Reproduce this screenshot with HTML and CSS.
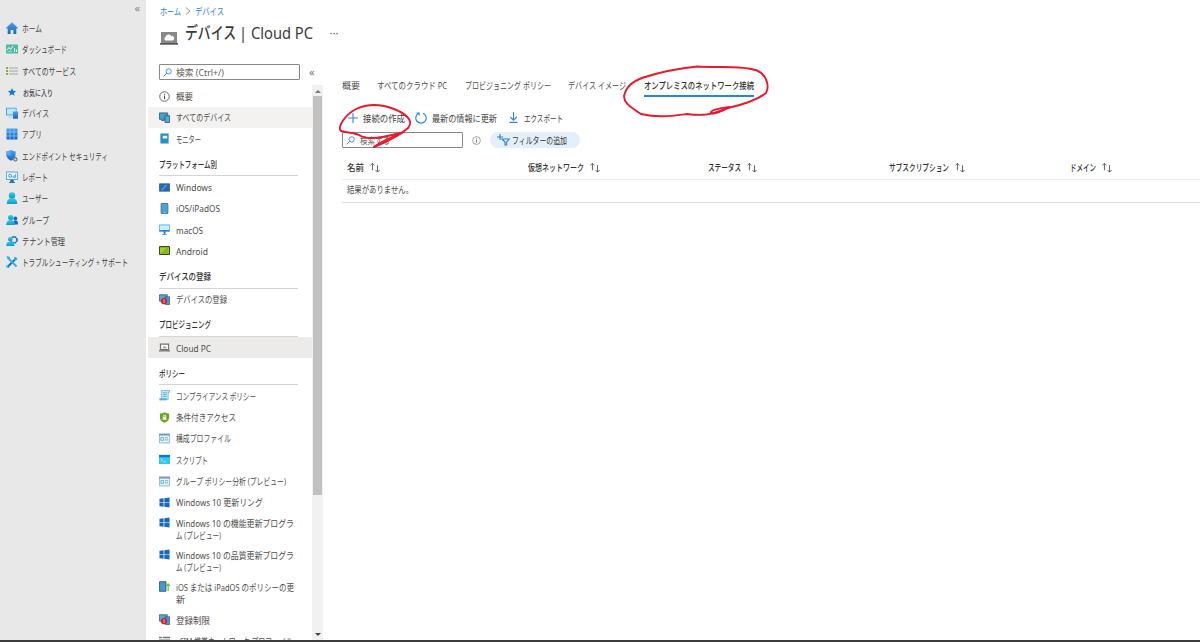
FILE: index.html
```html
<!DOCTYPE html>
<html lang="ja">
<head>
<meta charset="utf-8">
<title>デバイス | Cloud PC</title>
<link rel="stylesheet" href="styles.css">
</head>
<body>
<svg class="defs" width="0" height="0">
<defs>
<linearGradient id="cy" x1="0" y1="0" x2="0" y2="1"><stop offset="0" stop-color="#35cdea"/><stop offset="1" stop-color="#0b9bd0"/></linearGradient>
<linearGradient id="bl" x1="0" y1="0" x2="0" y2="1"><stop offset="0" stop-color="#4ba0ef"/><stop offset="1" stop-color="#1267ca"/></linearGradient>
<symbol id="i-home" viewBox="0 0 12 12"><path d="M6 .2 12 6l-.7.8-1-.5V12H7.400V8H4.600v4H1.700V6.300l-1 .5L0 6z" fill="url(#bl)"/></symbol>
<symbol id="i-dash" viewBox="0 0 12 12"><path d="M0 1.500h12v9H0z" fill="#4dbda3"/><path d="M1 7 3 4.500l1.500 2L7 3" fill="none" stroke="#fff" stroke-width=".9"/><path d="M8 5h1v4H8zM10 6.500h1V9h-1zM1.500 8.500H6v.6H1.500z" fill="#e6fff8"/></symbol>
<symbol id="i-list" viewBox="0 0 12 12"><path d="M0 2h2v2H0zM0 5h2v2H0zM0 8h2v2H0z" fill="#7db442"/><path d="M3 2.500h9v1H3zM3 5.500h9v1H3zM3 8.500h9v1H3z" fill="#a3a3a3"/></symbol>
<symbol id="i-star" viewBox="0 0 12 12"><path d="m6 2 1.200 2.800 2.900.2-2.200 1.900.7 2.900L6 8.300 3.400 9.800l.7-2.900L1.900 5l2.900-.2z" fill="#0f78d4"/></symbol>
<symbol id="i-dev" viewBox="0 0 12 12"><path d="M0 .8h10.500v7.500H0z" fill="#3d92df"/><path d="M.8 1.500h9v6h-9z" fill="#b3ecff"/><path d="M2.500 9.500h4v1h-4z" fill="#b8c5ce"/><path d="M7 4.500h5v7.200H7z" fill="url(#bl)"/></symbol>
<symbol id="i-apps" viewBox="0 0 12 12"><path d="M.5.5h11v11H.5z" fill="url(#bl)"/><path d="M4 .5v11M8 .5v11M.5 4h11M.5 8h11" stroke="#a6d4fb" stroke-width=".6"/></symbol>
<symbol id="i-shield" viewBox="0 0 12 12"><path d="M5 0c1.500 1 3 1.300 4.600 1.300V5c0 2.500-2 4.500-4.600 5.800C2.400 9.500.4 7.500.4 5V1.300C2 1.300 3.500 1 5 0z" fill="url(#bl)"/><path d="M5 0v5.300H.4V1.300C2 1.300 3.500 1 5 0z" fill="#55aaf4"/><circle cx="9.300" cy="9.300" r="1.700" fill="#d5d5d5" stroke="#777" stroke-width="1.200"/></symbol>
<symbol id="i-report" viewBox="0 0 12 12"><path d="M.4 1h11.200v7.500H.4z" fill="#eef9ff" stroke="#3290df" stroke-width=".8"/><path d="M4.500 8.800h3l.5 2.700H4z" fill="#1d6fb8"/><path d="M3 11h6v.8H3z" fill="#1d6fb8"/><circle cx="4.200" cy="4.800" r="1.500" fill="none" stroke="#2389d8" stroke-width=".9"/><path d="M7 5v2M8.300 4v3M9.600 2.800V7" stroke="#2389d8" stroke-width=".7"/></symbol>
<symbol id="i-user" viewBox="0 0 12 12"><path d="M.8 12C.8 8.300 2.500 6.300 6 6.300s5.200 2 5.200 5.700z" fill="url(#cy)"/><circle cx="6" cy="3.400" r="3.200" fill="url(#cy)"/></symbol>
<symbol id="i-group" viewBox="0 0 12 12"><circle cx="9.400" cy="4.500" r="1.900" fill="#1267c8"/><path d="M6.500 10.500c0-3 1-4 3-4s2.500 1 2.500 4z" fill="#1267c8"/><circle cx="4.700" cy="3.600" r="2.700" fill="url(#cy)"/><path d="M.2 11c0-3.500 1.800-5 4.500-5S9 7.500 9 11z" fill="url(#cy)"/></symbol>
<symbol id="i-tenant" viewBox="0 0 12 12"><circle cx="8" cy="4.900" r="3" fill="none" stroke="#176fd0" stroke-width="1.700" stroke-dasharray="1.900 .45"/><circle cx="4.300" cy="4.200" r="2.300" fill="url(#cy)"/><path d="M.2 11c0-3.300 1.500-4.600 4.100-4.600S8.500 7.700 8.500 11z" fill="url(#cy)"/></symbol>
<symbol id="i-tools" viewBox="0 0 12 12"><path d="m2 10.500 8.500-8.500" stroke="#1b6ac0" stroke-width="1.900"/><path d="m1.500 1.500 9 9" stroke="#27b4e3" stroke-width="2"/><path d="M.7.7 3 1.200l.8 1.600M9 .8 8.500 3.500l2.700-.4M.8 9l.3 2.200 2.200.3" fill="none" stroke="#27b4e3" stroke-width="1.200"/></symbol>
<symbol id="i-info" viewBox="0 0 12 12"><circle cx="6" cy="6" r="5.200" fill="none" stroke="currentColor" stroke-width=".9"/><path d="M5.400 5h1.200v4H5.400zM5.400 3h1.200v1.200H5.400z" fill="currentColor"/></symbol>
<symbol id="i-alldev" viewBox="0 0 12 12"><path d="M.5 1h9v7h-9z" fill="#37a5d6" stroke="#38576b" stroke-width=".9"/><path d="M2.500 8.800H6v1H2.500z" fill="#555"/><path d="M6.500 4h5v7.500h-5z" fill="#45afe0" stroke="#38576b" stroke-width=".9"/></symbol>
<symbol id="i-mon" viewBox="0 0 12 12"><path d="M1.500.5h9v11h-9z" fill="#2790c4"/><path d="M4 3h5v3H4z" fill="#e9f7ff"/></symbol>
<symbol id="i-win" viewBox="0 0 12 12"><path d="M.4 2h11.200v8H.4z" fill="#1e70bd" stroke="#47525c" stroke-width=".9"/><path d="m2 9 5-6h2L4 9z" fill="#4b9ee0"/></symbol>
<symbol id="i-ipad" viewBox="0 0 12 12"><rect x="2.300" y=".4" width="7.400" height="11.200" rx=".8" fill="#40a9d8" stroke="#4d626e" stroke-width=".9"/><path d="M5 10.700h2" stroke="#fff" stroke-width=".6"/></symbol>
<symbol id="i-mac" viewBox="0 0 12 12"><path d="M.4 1h11.200v7H.4z" fill="#c7efff" stroke="#3c9be8" stroke-width=".8"/><path d="M.4 6.500h11.200V8H.4zM5 8h2v3h1.500v.7h-5V11H5z" fill="#1f81dc"/></symbol>
<symbol id="i-and" viewBox="0 0 12 12"><rect x=".5" y="1.800" width="11" height="8.400" rx=".6" fill="#a2d525" stroke="#3c4434" stroke-width="1.200"/><path d="m2 9 6-6h2v6z" fill="#82b91a"/></symbol>
<symbol id="i-enr" viewBox="0 0 12 12"><path d="M.5.8h8.500v7H.5z" fill="#47aad8" stroke="#3a5568" stroke-width=".8"/><path d="M7 3h4.500v8.500H7z" fill="#38a0d4" stroke="#3a5568" stroke-width=".8"/><circle cx="5.500" cy="7.800" r="3.400" fill="#d5202d"/><path d="M5.500 6v2.200M5.500 8.800v1" stroke="#fff" stroke-width=".9"/></symbol>
<symbol id="i-cpc" viewBox="0 0 12 12"><path d="M1.600 2.400h8.800v6H1.600z" fill="#fff" stroke="#737373" stroke-width="1.300"/><path d="M0 9h12v1.300H0z" fill="#666"/><path d="M3.800 7h4.500V5.800L6.500 4.500 4.500 5z" fill="#aaa"/></symbol>
<symbol id="i-scroll" viewBox="0 0 12 12"><path d="M2.500.6h9v2H10v7.600H2.500z" fill="#c8ebfa" stroke="#5aaedb" stroke-width=".8"/><path d="M.4 9h8v2.300h-8z" fill="#4db1e2"/><path d="M4 3h4.500M4 5h4.500M4 7h4.500" stroke="#3289c5" stroke-width=".7"/></symbol>
<symbol id="i-cond" viewBox="0 0 12 12"><path d="M6 .3C7.500 1.300 9 1.700 11 1.700V6c0 3-2.200 4.600-5 5.800C3.200 10.600 1 9 1 6V1.700C3 1.700 4.500 1.300 6 .3z" fill="#65aa12"/><path d="M4 5h4v3.500H4z" fill="#fff"/><path d="M4.800 5V3.500h2.400V5" fill="none" stroke="#fff" stroke-width=".8"/></symbol>
<symbol id="i-conf" viewBox="0 0 12 12"><path d="M.4 1.200h11.200v9.600H.4z" fill="#e6f4fb" stroke="#6d9fbe" stroke-width=".8"/><path d="M0 .8h12v2H0z" fill="#779bb0"/><path d="M2 5h3v3H2zM6.500 5.200H10M6.500 7.500H10" fill="none" stroke="#4ba6d6" stroke-width=".9"/></symbol>
<symbol id="i-script" viewBox="0 0 12 12"><path d="M0 1h12v10H0z" fill="#31c7f2"/><path d="M0 1h12v2.500H0z" fill="#1673cb"/><path d="m2 5 2 1.500L2 8M5 8.500h2.500" fill="none" stroke="#fff" stroke-width=".7"/></symbol>
<symbol id="i-w10" viewBox="0 0 12 12"><path d="M.5 2 5 1.400v4.200H.5zM5.800 1.300l5.700-.8v5.100H5.800zM.5 6.400H5v4.200L.5 10zM5.800 6.400h5.700v5.100l-5.700-.8z" fill="#1769bc"/></symbol>
<symbol id="i-iosup" viewBox="0 0 12 12"><path d="M.6.8h7v10.400h-7z" fill="#3b9fd2" stroke="#39566a" stroke-width="1"/><path d="M10 11V3.500M8 5.500l2-2.300 2 2.300" fill="none" stroke="#78b833" stroke-width="1.300"/></symbol>
<symbol id="i-esim" viewBox="0 0 12 12"><path d="M0 2h3v1.500H0zM4 2h8v1.500H4zM0 5h12v6H0z" fill="#777"/></symbol>
<symbol id="i-search" viewBox="0 0 12 12"><circle cx="7.500" cy="4.500" r="3.500" fill="none" stroke="#3289d6" stroke-width="1.200"/><path d="M5 7 .8 11.200" stroke="#3289d6" stroke-width="1.300"/></symbol>
<symbol id="i-sort" viewBox="0 0 12 12"><path d="M3.200 9v-7.500M1 3.700l2.200-2.200 2.200 2.200M8.800 3.500v7.500M6.600 8.800l2.200 2.200 2.200-2.200" fill="none" stroke="#555" stroke-width="1"/></symbol>
</defs>
</svg>

<div class="app">
  <nav class="side">
    <div class="collapse">«</div>
    <div class="nav"><svg><use href="#i-home"/></svg><span data-w="20">ホーム</span></div>
    <div class="nav"><svg><use href="#i-dash"/></svg><span data-w="45">ダッシュボード</span></div>
    <div class="nav"><svg><use href="#i-list"/></svg><span data-w="54">すべてのサービス</span></div>
    <div class="nav fav"><svg><use href="#i-star"/></svg><span data-w="30">お気に入り</span></div>
    <div class="nav"><svg><use href="#i-dev"/></svg><span data-w="27">デバイス</span></div>
    <div class="nav"><svg><use href="#i-apps"/></svg><span data-w="20">アプリ</span></div>
    <div class="nav"><svg><use href="#i-shield"/></svg><span data-w="86">エンドポイント セキュリティ</span></div>
    <div class="nav"><svg><use href="#i-report"/></svg><span data-w="26">レポート</span></div>
    <div class="nav"><svg><use href="#i-user"/></svg><span data-w="26">ユーザー</span></div>
    <div class="nav"><svg><use href="#i-group"/></svg><span data-w="27">グループ</span></div>
    <div class="nav"><svg><use href="#i-tenant"/></svg><span data-w="43">テナント管理</span></div>
    <div class="nav"><svg><use href="#i-tools"/></svg><span data-w="106">トラブルシューティング + サポート</span></div>
  </nav>

  <div class="page">
    <header>
      <div class="crumbs"><span data-w="21">ホーム</span><svg viewBox="0 0 14 10"><path d="m5 1.500 4 3.500-4 3.500" fill="none" stroke="#999"/></svg><span data-w="29">デバイス</span></div>
      <div class="title">
        <svg class="pc" viewBox="0 0 18 13"><path d="M1 0h16v11H1z" fill="#898989"/><path d="M0 11h18v1.700H0z" fill="#555"/><path d="M5.500 8.500a2 2 0 0 1 0-3.600 3.200 3.200 0 0 1 6-.7 2.200 2.200 0 0 1 1 4.300z" fill="#fff"/></svg>
        <h1><b data-w="51">デバイス</b><span class="sub" data-w="74">| Cloud PC</span></h1>
        <span class="dots">···</span>
      </div>
    </header>
    <div class="body">
      <aside class="menu">
        <div class="searchrow"><div class="box"><svg><use href="#i-search"/></svg><span data-w="48">検索 (Ctrl+/)</span></div><span class="chev">«</span></div>
        <div class="scroll">
          <div class="list">
            <div class="row"><svg><use href="#i-info"/></svg><span data-w="17">概要</span></div>
            <div class="row hov"><svg><use href="#i-alldev"/></svg><span data-w="55">すべてのデバイス</span></div>
            <div class="row"><svg><use href="#i-mon"/></svg><span data-w="25">モニター</span></div>
            <h2><span data-w="58">プラットフォーム別</span></h2>
            <div class="row"><svg><use href="#i-win"/></svg><span data-w="36">Windows</span></div>
            <div class="row"><svg><use href="#i-ipad"/></svg><span data-w="44">iOS/iPadOS</span></div>
            <div class="row"><svg><use href="#i-mac"/></svg><span data-w="27">macOS</span></div>
            <div class="row"><svg><use href="#i-and"/></svg><span data-w="32">Android</span></div>
            <h2><span data-w="52">デバイスの登録</span></h2>
            <div class="row"><svg><use href="#i-enr"/></svg><span data-w="51">デバイスの登録</span></div>
            <h2><span data-w="52">プロビジョニング</span></h2>
            <div class="row sel"><svg><use href="#i-cpc"/></svg><span data-w="35">Cloud PC</span></div>
            <h2><span data-w="26">ポリシー</span></h2>
            <div class="row"><svg><use href="#i-scroll"/></svg><span data-w="80">コンプライアンス ポリシー</span></div>
            <div class="row"><svg><use href="#i-cond"/></svg><span data-w="60">条件付きアクセス</span></div>
            <div class="row"><svg><use href="#i-conf"/></svg><span data-w="55">構成プロファイル</span></div>
            <div class="row"><svg><use href="#i-script"/></svg><span data-w="32">スクリプト</span></div>
            <div class="row"><svg><use href="#i-conf"/></svg><span data-w="110">グループ ポリシー分析 (プレビュー)</span></div>
            <div class="row"><svg><use href="#i-w10"/></svg><span data-w="87">Windows 10 更新リング</span></div>
            <div class="row two"><svg><use href="#i-w10"/></svg><div><span data-w="118">Windows 10 の機能更新プログラ</span><span data-w="45">ム (プレビュー)</span></div></div>
            <div class="row two"><svg><use href="#i-w10"/></svg><div><span data-w="118">Windows 10 の品質更新プログラ</span><span data-w="45">ム (プレビュー)</span></div></div>
            <div class="row two"><svg><use href="#i-iosup"/></svg><div><span data-w="118">iOS または iPadOS のポリシーの更</span><span data-w="9">新</span></div></div>
            <div class="row"><svg><use href="#i-enr"/></svg><span data-w="34">登録制限</span></div>
            <div class="row"><svg><use href="#i-esim"/></svg><span data-w="117">eSIM 携帯ネットワーク プロファイル</span></div>
          </div>
          <div class="bar"><i class="up"></i><div class="thumb"></div><i class="down"></i></div>
        </div>
      </aside>
      <main>
        <div class="tabs">
          <span data-w="18">概要</span><span data-w="70">すべてのクラウド PC</span><span data-w="86">プロビジョニング ポリシー</span><span data-w="58">デバイス イメージ</span>
          <div class="active"><span data-w="110">オンプレミスのネットワーク接続</span></div>
        </div>
        <div class="tools">
          <svg class="plus" viewBox="0 0 10 10"><path d="M5 0v10M0 5h10" stroke="#3289d6" stroke-width="1.100"/></svg><span class="c1" data-w="42">接続の作成</span>
          <svg class="ref" viewBox="0 0 12 12"><path d="M8.200 1.200A5.200 5.200 0 1 1 3.600 1.300M1.500 1h2.600v2.600" fill="none" stroke="#3289d6" stroke-width="1.200"/></svg><span class="c2" data-w="65">最新の情報に更新</span>
          <svg class="dl" viewBox="0 0 9 11"><path d="M4.500 0v8M1.300 5l3.200 3.200L7.700 5M.5 10.400h8" fill="none" stroke="#3289d6" stroke-width="1.100"/></svg><span data-w="39">エクスポート</span>
        </div>
        <div class="filters">
          <div class="box"><svg><use href="#i-search"/></svg><span data-w="30">検索する</span></div>
          <svg class="inf"><use href="#i-info"/></svg>
          <div class="pill"><svg viewBox="0 0 13 12"><path d="M3 0v6M0 3h6M5 5h7.300L9.700 8v3H8V8z" fill="none" stroke="#2d7fd0" stroke-width="1.100"/></svg><span data-w="55">フィルターの追加</span></div>
        </div>
        <div class="thead">
          <div><span data-w="17">名前</span><svg><use href="#i-sort"/></svg></div>
          <div><span data-w="56">仮想ネットワーク</span><svg><use href="#i-sort"/></svg></div>
          <div><span data-w="33">ステータス</span><svg><use href="#i-sort"/></svg></div>
          <div><span data-w="60">サブスクリプション</span><svg><use href="#i-sort"/></svg></div>
          <div><span data-w="26">ドメイン</span><svg><use href="#i-sort"/></svg></div>
        </div>
        <div class="empty"><span data-w="66">結果がありません。</span></div>
      </main>
    </div>
  </div>
</div>
<div class="base"></div>
<svg class="ink" viewBox="0 0 1200 642"><g fill="none" stroke="#e8192c" stroke-linecap="round" stroke-linejoin="round">
<path stroke-width="1.900" d="M374 147C384 143 398 137 408 128C415 120 404 113 394 109C381 104 367 104 356 109C345 115 337 127 341 131C346 133 355 132 361 136C368 140 382 138 400 133"/>
<path stroke-width="1.800" d="M374 147C380 142 391 137 404 132"/>
<path stroke-width="1.900" d="M645 77C661 72 673 69 697 66.500C719 68 742 65 757 70.500C766 74 770 86 766 93C756 101 741 105 728 108C711 115 703 116 687 114C671 116 658 118 641 114C630 107 621 101 625 93C628 84 636 79 649 76"/>
<path stroke-width="1.900" d="M729 107C720 108 707 111 712 113.500C717 114 724 110 729 107"/>
</g></svg>
<script src="fit.js"></script>
</body>
</html>
```
FILE: styles.css
```css
* { box-sizing: border-box; }
body {
  margin: 0; width: 1200px; height: 642px; overflow: hidden; position: relative;
  background: #fff; color: #504e4c;
  font: 9.500px/12px "Noto Sans", "Noto Sans CJK JP", sans-serif;
}
svg { flex: none; display: block; }
.defs { position: absolute; }
[data-w] { display: block; white-space: nowrap; transform-origin: 0 50%; translate: 0 .6px; flex: none; }
.app { display: flex; height: 640px; overflow: hidden; }
.base { height: 2px; background: #3c3c3c; }

.side { width: 146px; background: #e8e8e8; flex: none; }
.collapse { height: 17.500px; line-height: 15px; font-size: 11px; color: #888; text-align: right; padding-right: 6px; }
.nav { display: flex; align-items: center; height: 21.270px; padding-left: 6px; gap: 4px; color: #454443; }
.nav svg { width: 12px; height: 12px; }
.fav { font-size: 8px; font-weight: 500; }
.fav span { margin-left: 1px; }

.page { flex: 1; display: flex; flex-direction: column; min-width: 0; }
header { height: 63px; padding-left: 13.500px; flex: none; }
.crumbs { display: flex; height: 22px; align-items: center; color: #2b7fd3; }
.crumbs svg { width: 14px; height: 10px; }
.title { display: flex; align-items: center; height: 22px; }
.pc { width: 18px; height: 13px; margin: 11px 7px 0 0; }
h1 { margin: 0; display: flex; font-size: 16.500px; line-height: 22px; font-weight: 400; color: #3b3a39; }
h1 b { font-weight: 500; font-size: 17px; }
h1 [data-w] { translate: 0 -.3px; }
.sub { margin-left: 3px; }
.dots { margin-left: 17px; font-size: 11px; color: #555; }

.body { display: flex; flex: 1; min-height: 0; }
.menu { width: 177px; flex: none; display: flex; flex-direction: column; }
.searchrow { height: 22px; flex: none; display: flex; padding: 1px 0 0 13px; }
.box { display: flex; align-items: center; width: 141px; height: 16px; border: 1px solid #8a8886; border-radius: 1px; padding-left: 3px; gap: 4px; color: #605e5c; }
.box svg { width: 9px; height: 9px; }
.chev { margin-left: 9px; line-height: 15px; color: #777; font-size: 11px; }
.scroll { display: flex; flex: 1; min-height: 0; }
.list { width: 166px; padding-left: 2px; overflow: hidden; padding-top: .5px; }
.row { display: flex; align-items: center; height: 21.300px; flex: none; padding-left: 11px; gap: 6px; }
.row svg { width: 11px; height: 11px; }
.hov { background: #f3f2f1; }
.sel { background: #edebe9; }
.two { height: 32px; align-items: flex-start; padding-top: 4.500px; line-height: 11.300px; }
h2 { margin: 0 14px 0 11px; height: 27px; border-bottom: 1px solid #d6d5d4; font-size: 9.500px; line-height: 12px; padding-top: 8.500px; font-weight: 500; color: #323130; }
.bar { width: 11px; background: #f1f1f1; display: flex; flex-direction: column; align-items: center; }
.bar i { border: 3px solid transparent; }
.up { border-bottom-color: #777 !important; border-top: 0 !important; margin: 5px 0 3px; }
.thumb { width: 9px; height: 399px; background: #c1c1c1; }
.down { border-top-color: #444 !important; border-bottom: 0 !important; margin-top: auto; margin-bottom: 4px; }

main { flex: 1; padding-left: 18.500px; min-width: 0; }
.tabs { display: flex; gap: 17.500px; padding-top: 16px; height: 43px; }
.active { font-weight: 500; color: #323130; border-bottom: 2px solid #2388dc; height: 18px; }
.tools { display: flex; align-items: center; height: 23px; padding-left: 6px; color: #454443; }
.plus { width: 10px; height: 10px; margin-right: 5px; }
.ref { width: 12px; height: 12px; margin: 0 5px 0 10px; }
.dl { width: 9px; height: 11px; margin: 0 6px 0 12px; }
.filters { display: flex; align-items: center; height: 22px; }
.filters .box { width: 121px; gap: 5px; }
.inf { width: 9px; height: 9px; margin: 0 9px; color: #777; }
.pill { display: flex; align-items: center; gap: 2px; width: 90px; height: 16px; border-radius: 8px; background: #e3f0fb; padding-left: 7px; color: #323130; }
.pill svg { width: 13px; height: 12px; }
.thead { display: grid; grid-template-columns: repeat(5, 180.700px); height: 28.500px; border-bottom: 1px solid #edebe9; padding: 5px 0 0 5.500px; font-weight: 500; color: #323130; overflow: hidden; }
.thead > div { display: flex; align-items: center; gap: 5px; }
.thead svg { width: 12px; height: 11px; }
.empty { height: 23.500px; border-bottom: 1.500px solid #dededd; padding: 3px 0 0 5.500px; }
.ink { position: absolute; left: 0; top: 0; width: 1200px; height: 642px; pointer-events: none; }
```
FILE: fit.js
```js
// Condense each label to the width of its slot.
document.querySelectorAll('[data-w]').forEach(function (el) {
  var w = parseFloat(el.dataset.w);
  var range = document.createRange();
  range.selectNodeContents(el);
  var natural = range.getBoundingClientRect().width;
  el.style.width = w + 'px';
  el.style.transform = 'scaleX(' + w / natural + ')';
});
```
